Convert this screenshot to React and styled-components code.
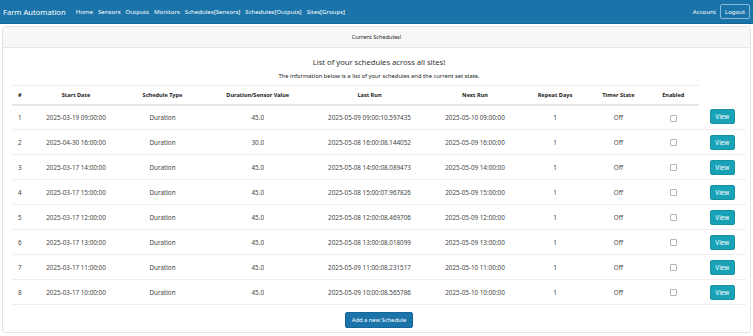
import styled, { createGlobalStyle } from "styled-components";

const GlobalStyle = createGlobalStyle`
  body {
    margin: 0;
    background: #ffffff;
    font-family: "Noto Sans", "Open Sans", sans-serif;
    color: #212529;
  }
`;

const schedules = [
  ["2025-03-19 09:00:00", "45.0", "2025-05-09 09:00:10.597435", "2025-05-10 09:00:00"],
  ["2025-04-30 16:00:00", "30.0", "2025-05-08 16:00:08.144052", "2025-05-09 16:00:00"],
  ["2025-03-17 14:00:00", "45.0", "2025-05-08 14:00:08.089473", "2025-05-09 14:00:00"],
  ["2025-03-17 15:00:00", "45.0", "2025-05-08 15:00:07.967826", "2025-05-09 15:00:00"],
  ["2025-03-17 12:00:00", "45.0", "2025-05-08 12:00:08.469706", "2025-05-09 12:00:00"],
  ["2025-03-17 13:00:00", "45.0", "2025-05-08 13:00:08.018099", "2025-05-09 13:00:00"],
  ["2025-03-17 11:00:00", "45.0", "2025-05-09 11:00:08.231517", "2025-05-10 11:00:00"],
  ["2025-03-17 10:00:00", "45.0", "2025-05-09 10:00:08.565786", "2025-05-10 10:00:00"],
];

const widths = [20.5, 87, 86, 104.5, 119, 92, 68, 59, 50.5, 47.5];
const headers = [
  "#",
  "Start Date",
  "Schedule Type",
  "Duration/Sensor Value",
  "Last Run",
  "Next Run",
  "Repeat Days",
  "Timer State",
  "Enabled",
];

const App = () => {
  return (
    <>
      <GlobalStyle />
      <Navbar>
        <NavLeft>
          <Brand>Farm Automation</Brand>
          <NavLink>Home</NavLink>
          <NavLink>Sensors</NavLink>
          <NavLink>Outputs</NavLink>
          <NavLink>Monitors</NavLink>
          <NavLink>Schedules[Sensors]</NavLink>
          <NavLink>Schedules[Outputs]</NavLink>
          <NavLink>Sites[Groups]</NavLink>
        </NavLeft>
        <NavRight>
          <NavLink>Account</NavLink>
          <LogoutButton>Logout</LogoutButton>
        </NavRight>
      </Navbar>
      <Card>
        <CardHeader>Current Schedules!</CardHeader>
        <CardBody>
          <Title>List of your schedules across all sites!</Title>
          <Subtitle>
            The information below is a list of your schedules and the current
            set state.
          </Subtitle>
          <Table>
            <colgroup>
              {widths.map((w, i) => (
                <col key={i} style={{ width: w }} />
              ))}
            </colgroup>
            <thead>
              <tr>
                {headers.map((h, i) => (
                  <Th key={h} $left={i === 0}>
                    {h}
                  </Th>
                ))}
              </tr>
            </thead>
            <tbody>
              {schedules.map((s, i) => (
                <tr key={i}>
                  <Td $left>{i + 1}</Td>
                  <Td>{s[0]}</Td>
                  <Td>Duration</Td>
                  <Td>{s[1]}</Td>
                  <Td>{s[2]}</Td>
                  <Td>{s[3]}</Td>
                  <Td>1</Td>
                  <Td>Off</Td>
                  <Td>
                    <Checkbox />
                  </Td>
                  <Td>
                    <ViewButton>View</ViewButton>
                  </Td>
                </tr>
              ))}
            </tbody>
          </Table>
          <AddRow>
            <AddButton>Add a new Schedule</AddButton>
          </AddRow>
        </CardBody>
      </Card>
    </>
  );
};

const Navbar = styled.nav`
  height: 24px;
  background: #1a74a9;
  display: flex;
  align-items: center;
  justify-content: space-between;
  padding: 0 3px 0 3px;
  border-bottom: 1px solid #136494;
  box-sizing: border-box;
`;

const NavLeft = styled.div`
  display: flex;
  align-items: center;
  gap: 5px;
`;

const NavRight = styled.div`
  display: flex;
  align-items: center;
  gap: 4px;
`;

const Brand = styled.span`
  color: #ffffff;
  font-size: 7.6px;
  margin-right: 5px;
`;

const NavLink = styled.span`
  color: #ffffff;
  font-size: 6.1px;
`;

const LogoutButton = styled.button`
  font-family: inherit;
  font-size: 6px;
  color: #ffffff;
  background: transparent;
  border: 1px solid #86bcd9;
  border-radius: 2px;
  width: 30px;
  height: 15px;
  padding: 0;
`;

const Card = styled.div`
  margin: 2px 2px 0;
  border: 1px solid #e3e3e3;
  border-radius: 3px;
  height: 307px;
  box-sizing: border-box;
`;

const CardHeader = styled.div`
  height: 20px;
  background: #f7f7f7;
  border-bottom: 1px solid #e6e6e6;
  display: flex;
  align-items: center;
  justify-content: center;
  font-size: 5.6px;
  color: #222;
`;

const CardBody = styled.div`
  padding: 8px 4px 0 9px;
  display: flex;
  flex-direction: column;
  align-items: center;
`;

const Title = styled.div`
  font-size: 7.6px;
  color: #333;
  line-height: 12px;
`;

const Subtitle = styled.div`
  font-size: 5.8px;
  color: #222;
  margin-top: 3px;
  line-height: 10px;
  margin-bottom: 4px;
`;

const Table = styled.table`
  width: 734px;
  table-layout: fixed;
  border-collapse: collapse;
  font-size: 6.3px;
  color: #444;
`;

const Th = styled.th`
  height: 19px;
  padding: 0 6px;
  border-top: 1px solid #eeeeee;
  border-bottom: 2px solid #e6e6e6;
  text-align: ${(p) => (p.$left ? "left" : "center")};
  font-size: 5.6px;
  font-weight: 700;
  color: #222;
  box-sizing: border-box;
`;

const Td = styled.td`
  height: 25px;
  padding: 0 6px;
  border-bottom: 1px solid #eeeeee;
  text-align: ${(p) => (p.$left ? "left" : "center")};
  box-sizing: border-box;
`;

const Checkbox = styled.span`
  display: inline-block;
  width: 5px;
  height: 5px;
  border: 1px solid #b5b5b5;
  border-radius: 1px;
  background: #fff;
  vertical-align: middle;
`;

const ViewButton = styled.button`
  font-family: inherit;
  font-size: 6.3px;
  color: #ffffff;
  background: #18a2b8;
  border: 1px solid #16939f;
  border-radius: 2px;
  width: 25px;
  height: 15px;
  padding: 0;
`;

const AddRow = styled.div`
  display: flex;
  justify-content: center;
  margin-top: 7px;
`;

const AddButton = styled.button`
  font-family: inherit;
  font-size: 5.8px;
  color: #ffffff;
  background: #1a74a9;
  border: 1px solid #15679a;
  border-radius: 2px;
  height: 16px;
  width: 68px;
  padding: 0;
`;

export default App;
